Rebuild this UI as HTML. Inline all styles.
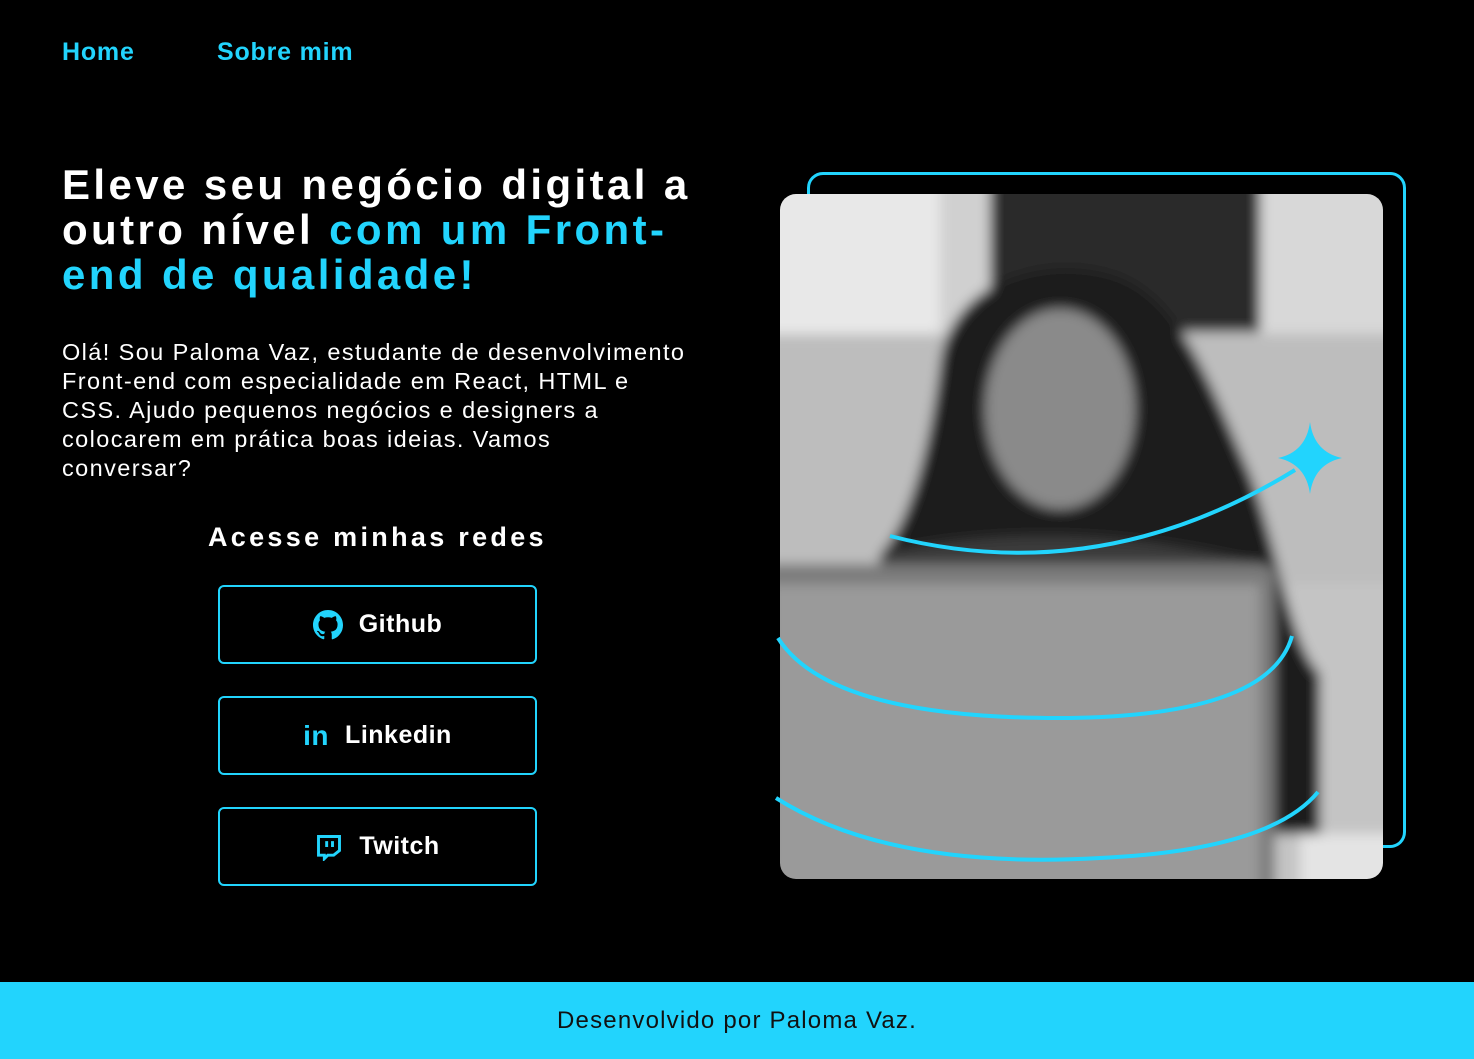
<!DOCTYPE html>
<html><head><meta charset="utf-8"><style>
*{margin:0;padding:0;box-sizing:border-box}
body{width:1474px;height:1059px;background:#000;font-family:"Liberation Sans",sans-serif;position:relative;overflow:hidden;color:#fff}
.nav a{position:absolute;top:38px;color:#22d4fd;font-size:25px;font-weight:bold;text-decoration:none;letter-spacing:0.8px}
h1{position:absolute;left:62px;top:162px;font-size:42px;line-height:45px;font-weight:bold;letter-spacing:3.4px;white-space:nowrap}
h1 span{color:#22d4fd}
p.intro{position:absolute;left:62px;top:338px;font-size:23.5px;line-height:29px;white-space:nowrap;letter-spacing:1.4px}
h2{position:absolute;left:208px;top:522px;font-size:27px;font-weight:bold;letter-spacing:3.3px}
.btn{position:absolute;left:218px;width:319px;height:79px;border:2px solid #22d4fd;border-radius:6px;display:flex;align-items:center;justify-content:center;gap:16px;font-size:25px;font-weight:bold;letter-spacing:0.5px}
.frame{position:absolute;left:807px;top:172px;width:599px;height:676px;border:3px solid #22d4fd;border-radius:16px}
.photo{position:absolute;left:780px;top:194px;width:603px;height:685px;border-radius:16px;overflow:hidden}
footer{position:absolute;left:0;top:982px;width:1474px;height:77px;background:#22d4fd;color:#111;font-size:24px;text-align:center;line-height:77px;letter-spacing:1.2px}
</style></head><body>
<div class="nav"><a style="left:62px">Home</a><a style="left:217px">Sobre mim</a></div>
<h1>Eleve seu negócio digital a<br>outro nível <span>com um Front-<br>end de qualidade!</span></h1>
<p class="intro">Olá! Sou Paloma Vaz, estudante de desenvolvimento<br>Front-end com especialidade em React, HTML e<br>CSS. Ajudo pequenos negócios e designers a<br>colocarem em prática boas ideias. Vamos<br>conversar?</p>
<h2>Acesse minhas redes</h2>
<div class="btn" style="top:585px"><svg width="30" height="30" viewBox="0 0 16 16"><path fill="#22d4fd" d="M8 0C3.58 0 0 3.58 0 8c0 3.540 2.290 6.53 5.47 7.59.4.07.55-.17.55-.38v-1.33c-2.230.48-2.7-1.070-2.7-1.070-.36-.92-.89-1.170-.89-1.170-.73-.5.06-.49.06-.49.8.06 1.23.83 1.23.83.71 1.22 1.87.87 2.33.66.07-.52.28-.87.5-1.070-1.780-.2-3.64-.89-3.64-3.95 0-.87.31-1.59.82-2.150-.08-.2-.36-1.02.08-2.12 0 0 .67-.21 2.2.82a7.6 7.6 0 014 0c1.53-1.04 2.2-.82 2.2-.82.44 1.1.16 1.92.08 2.12.51.56.82 1.27.82 2.15 0 3.07-1.87 3.75-3.65 3.95.29.25.54.73.54 1.48v2.2c0 .21.15.46.55.38A8 8 0 0016 8c0-4.42-3.58-8-8-8z"/></svg>Github</div>
<div class="btn" style="top:696px"><span style="color:#22d4fd;font-size:28px">in</span>Linkedin</div>
<div class="btn" style="top:807px"><svg width="28" height="28" viewBox="0 0 24 24"><path fill="none" stroke="#22d4fd" stroke-width="2.5" d="M3 3h18v12l-5 4h-5l-3 3v-3H3z"/><path stroke="#22d4fd" stroke-width="2.5" d="M10 7v5M15 7v5"/></svg>Twitch</div>
<div class="frame"></div>
<div class="photo">
<svg width="603" height="685" viewBox="0 0 603 685">
<defs><filter id="b"><feGaussianBlur stdDeviation="6"/></filter></defs>
<g filter="url(#b)">
<rect x="-20" y="-20" width="650" height="730" fill="#c4c4c4"/>
<rect x="-20" y="-20" width="180" height="160" fill="#e8e8e8"/>
<rect x="160" y="-20" width="50" height="160" fill="#d0d0d0"/>
<rect x="210" y="-20" width="270" height="158" fill="#2a2a2a"/>
<rect x="480" y="-20" width="143" height="160" fill="#d8d8d8"/>
<rect x="-20" y="140" width="640" height="250" fill="#bdbdbd"/>
<path d="M160 170 C170 90 260 60 330 80 C400 100 430 190 470 280 C500 360 510 450 540 480 L540 640 L80 640 L100 360 C130 330 150 250 160 170Z" fill="#1e1e1e"/>
<ellipse cx="280" cy="215" rx="75" ry="100" fill="#8a8a8a"/>
<path d="M100 360 Q280 320 480 370 L480 420 L100 420Z" fill="#3a3a3a"/>
<rect x="-20" y="370" width="515" height="335" rx="14" fill="#7a7a7a"/>
<rect x="-10" y="390" width="490" height="315" fill="#9a9a9a"/>
<rect x="520" y="640" width="103" height="65" fill="#e4e4e4"/>
</g>
</svg>
</div>
<svg style="position:absolute;left:770px;top:160px" width="650" height="730" viewBox="0 0 650 730">
<path d="M120 376 Q330 430 525 310" fill="none" stroke="#22d4fd" stroke-width="4"/>
<path d="M540 262 Q544 292 572 298 Q544 304 540 334 Q536 304 508 298 Q536 292 540 262Z" fill="#22d4fd"/>
<path d="M8 478 Q60 560 300 558 Q500 555 522 476" fill="none" stroke="#22d4fd" stroke-width="4"/>
<path d="M6 638 Q120 710 330 698 Q500 690 548 632" fill="none" stroke="#22d4fd" stroke-width="4"/>
</svg>
<footer>Desenvolvido por Paloma Vaz.</footer>
</body></html>
